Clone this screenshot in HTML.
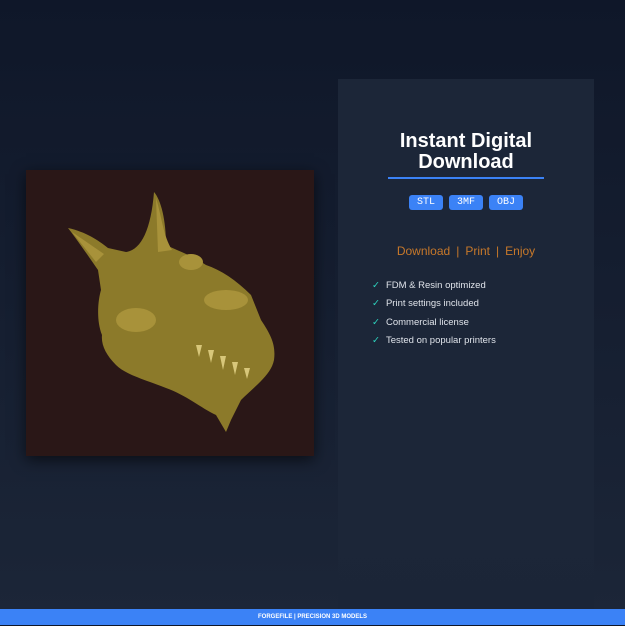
<!DOCTYPE html>
<html><head><style>
body{margin:0;width:625px;height:625px;overflow:hidden;background:linear-gradient(#0f1729,#1c2638);font-family:"Liberation Sans",sans-serif;position:relative}
.img{position:absolute;left:26px;top:170px;width:288px;height:286px;background:#2a1717;box-shadow:0 4px 14px rgba(0,0,0,.6)}
.panel{position:absolute;left:338px;top:79px;width:256px;height:530px;background:linear-gradient(#1c2638,#1c2638 80%,#1b2537)}
h1{position:absolute;left:0;width:256px;top:52px;margin:0;text-align:center;color:#fff;font-size:20px;line-height:21px;font-weight:bold}
.line{position:absolute;left:50px;top:98px;width:156px;height:2px;background:#3b82f6}
.tags{position:absolute;top:116px;left:0;width:256px;text-align:center;font-size:0}
.tags span{display:inline-block;background:#3b82f6;color:#fff;font-family:"Liberation Mono",monospace;font-size:10px;width:34px;height:15px;line-height:15px;margin:0 3px;border-radius:3px}
.dl{position:absolute;top:165px;left:0;width:256px;text-align:center;color:#c7782a;font-size:12px}
.dl i{font-style:normal;color:#c7782a;margin:0 6px}
ul{position:absolute;top:201px;left:34px;margin:0;padding:0;list-style:none;color:#dfe3ea;font-size:9.5px}
li{height:18.3px}
li b{color:#2dd4bf;font-weight:normal;margin-right:6px}
.foot{position:absolute;left:0;top:609px;width:625px;height:16px;background:#3b82f6;color:#fff;font-size:6px;font-weight:bold;text-align:center;line-height:17px}
</style></head><body>
<div class="img"><svg width="288" height="286" viewBox="0 0 288 286">
<g fill="#8c7a2a">
<path d="M42 58 C60 62 72 70 82 78 L100 82 C115 80 125 60 128 22 C135 30 140 50 140 75 C150 80 165 85 180 95 C195 100 210 110 225 125 L235 150 C245 165 250 175 248 190 C245 205 230 215 215 230 L205 250 L200 262 L190 245 C175 238 160 225 140 218 C120 210 100 205 90 195 C80 185 75 175 76 165 C70 150 72 130 75 120 L72 100 C65 90 55 75 42 58Z"/>
</g>
<g fill="#a8923a"><path d="M130 28 C136 48 137 65 146 80 L132 82Z"/><path d="M46 62 L78 84 L70 92Z"/><ellipse cx="165" cy="92" rx="12" ry="8"/><ellipse cx="200" cy="130" rx="22" ry="10"/><ellipse cx="110" cy="150" rx="20" ry="12"/></g>
<g fill="#d8c77a"><path d="M170 175 l3 12 l3 -12z M182 180 l3 13 l3 -13z M194 186 l3 14 l3 -14z M206 192 l3 13 l3 -13z M218 198 l3 11 l3 -11z"/></g>
</svg></div>
<div class="panel">
<h1>Instant Digital<br>Download</h1>
<div class="line"></div>
<div class="tags"><span>STL</span><span>3MF</span><span>OBJ</span></div>
<div class="dl">Download<i>|</i>Print<i>|</i>Enjoy</div>
<ul><li><b>✓</b>FDM &amp; Resin optimized</li><li><b>✓</b>Print settings included</li><li><b>✓</b>Commercial license</li><li><b>✓</b>Tested on popular printers</li></ul>
</div>
<div class="foot">FORGEFILE | PRECISION 3D MODELS</div>
</body></html>
